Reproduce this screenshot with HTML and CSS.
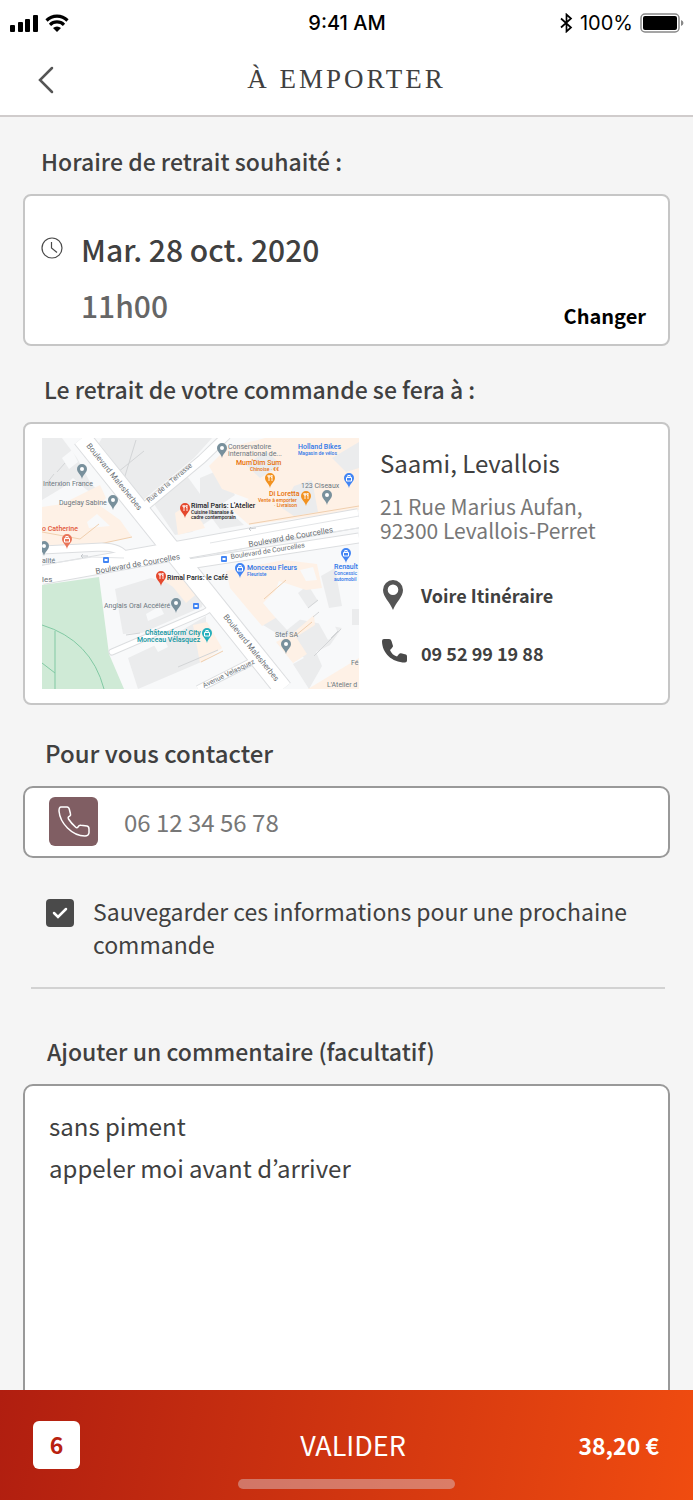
FILE: index.html
```html
<!DOCTYPE html>
<html lang="fr">
<head>
    <meta charset="UTF-8">
    <meta name="viewport" content="width=device-width, initial-scale=1.0">
    <title>À emporter</title>
    <link rel="stylesheet" href="styles.css">
</head>
<body>

<div class="status-bar">
    <div class="status-left">
        <svg width="28" height="18" viewBox="0 0 28 18">
            <rect x="0" y="11" width="5" height="7" rx="1"/>
            <rect x="8" y="8" width="5" height="10" rx="1"/>
            <rect x="15" y="5" width="5" height="13" rx="1"/>
            <rect x="23" y="1" width="5" height="17" rx="1"/>
        </svg>
        <svg width="24" height="18" viewBox="0 0 24 18">
            <path d="M1.500 6.500A15 15 0 0 1 22.500 6.500M5 10.800A10 10 0 0 1 19 10.800" fill="none" stroke="#000" stroke-width="3.200"/>
            <path d="M12 18L8 14A6 6 0 0 1 16 14Z"/>
        </svg>
    </div>
    <div class="status-time">9:41 AM</div>
    <div class="status-right">
        <svg width="13" height="20" viewBox="0 0 13 20">
            <path d="M1 5.500L11 14.500L6.500 18.500V1.500L11 5.500L1 14.500" fill="none" stroke="#000" stroke-width="1.700"/>
        </svg>
        <span>100%</span>
        <svg width="44" height="20" viewBox="0 0 44 20">
            <rect x="1" y="1" width="38" height="18" rx="4" fill="none" stroke="#888" stroke-width="1.500"/>
            <rect x="3" y="3" width="34" height="14" rx="2"/>
            <path d="M41 7Q43.500 8 43.500 10T41 13Z" fill="#888"/>
        </svg>
    </div>
</div>

<header class="header">
    <button type="button" class="back" aria-label="Retour">
        <svg width="16" height="28" viewBox="0 0 16 28">
            <path d="M14 2L2 14L14 26" fill="none" stroke="#555" stroke-width="2.500" stroke-linecap="round"/>
        </svg>
    </button>
    <h1>À EMPORTER</h1>
</header>

<main class="content">
    <h2>Horaire de retrait souhaité :</h2>
    <section class="card schedule">
        <svg class="clock" width="22" height="22" viewBox="0 0 22 22">
            <path d="M11 1A10 10 0 1 1 11 21A10 10 0 1 1 11 1M10.500 5V11L16 15.500" fill="none" stroke="#4a4a4a" stroke-width="1.200"/>
        </svg>
        <div class="slot">
            <p class="date">Mar. 28 oct. 2020</p>
            <p class="hour">11h00</p>
        </div>
        <button type="button" class="change">Changer</button>
    </section>

    <h2 class="title-place">Le retrait de votre commande se fera à :</h2>
    <section class="card place">
        <svg class="map" viewBox="0 0 317 251" role="img" aria-label="Plan du quartier">
            <defs>
                <g id="pin">
                    <path d="M0 9C-1 4 -5 3 -5 -1A5 5 0 0 1 5 -1C5 3 1 4 0 9Z"/>
                    <circle cx="0" cy="-1" r="2" fill="#fff"/>
                </g>
                <g id="food">
                    <path d="M0 9C-1 4 -5 3 -5 -1A5 5 0 0 1 5 -1C5 3 1 4 0 9Z"/>
                    <path d="M-2 -4V-2H-1V2M-1 -4V-2M0 -4V-2H-1M2 2V-4Q0 -2 2 -1" fill="none" stroke="#fff" stroke-width="0.900"/>
                </g>
                <g id="shop">
                    <path d="M0 9C-1 4 -5 3 -5 -1A5 5 0 0 1 5 -1C5 3 1 4 0 9Z"/>
                    <path d="M-2.500 -1.500H2.500V2H-2.500ZM-1.200 -1.500V-3.500H1.200V-1.500" fill="none" stroke="#fff"/>
                </g>
                <g id="bus">
                    <rect x="-3" y="-3" width="6" height="6" rx="1" fill="#4285f4"/>
                    <path d="M-1.500 -1H1.500V1H-1.500Z" fill="#fff"/>
                </g>
            </defs>
            <rect width="317" height="251" fill="#f8f9fa"/>

            <!-- blocks -->
            <g fill="#ebeced">
                <path d="M0 0H20L35 20L48 44L63 61L45 52L31 40L20 50L0 62Z"/>
                <path d="M60 0H170L152 20L101 62L57 5Z"/>
                <path d="M112 66L145 38L174 78L150 94L133 97Z"/>
                <path d="M158 40L177 32L193 57L180 66L202 87L178 91L158 64Z"/>
                <path d="M73 151L109 140L139 148L162 158L160 169L100 195L81 196Z"/>
                <path d="M86 220L120 204L164 178V222L96 251Z"/>
                <path d="M221 187L230 175L250 180L300 190L288 207L274 214L280 228L267 251L251 226L262 220L244 201Z"/>
                <path d="M256 155L266 147L276 163L266 170Z"/>
                <path d="M279 138L293 130L300 168L287 170Z"/>
                <path d="M310 171H317V187H310Z"/>
            </g>
            <g fill="#fef1e6">
                <path d="M0 69L20 66L58 47L64 60L57 67L78 82L90 99L33 111L0 107Z"/>
                <path d="M133 75L145 67L160 84L163 90L136 97Z"/>
                <path d="M167 28L185 10L223 0H317V72L207 87L190 72L207 61L180 51Z"/>
                <path d="M119 141L146 136L158 153L144 165L131 149Z"/>
                <path d="M184 133L242 122L275 126L280 150L264 152L237 143L227 168L237 178L220 188L188 150Z"/>
                <path d="M151 187L165 184L180 210L158 225Z"/>
                <path d="M234 204L250 196L272 177L273 187L254 199L265 216L251 225Z"/>
                <path d="M266 251L317 220V251Z"/>
            </g>
            <g fill="#ebeced">
                <path d="M204 27L224 13L240 27L218 40Z"/>
                <path d="M240 70L252 48L270 42L276 74L252 78Z"/>
                <path d="M290 20L317 4V30L304 34Z"/>
            </g>
            <g fill="#f8f9fa">
                <path d="M20 20L30 12L36 24L27 31Z"/>
                <path d="M45 84L55 76L68 88L47 90Z"/>
                <path d="M104 176L118 168L122 176L106 183Z"/>
                <path d="M112 207L122 201L126 209L116 214Z"/>
                <path d="M221 165L233 153L248 163L260 180L245 192L232 178Z"/>
                <path d="M258 132L271 129L275 142L264 143Z"/>
                <path d="M276 184L288 177L296 195L286 202Z"/>
            </g>
            <g fill="none" stroke="#d3d5d7" stroke-width="1">
                <path d="M79 51L94 2M76 34L102 13M15 34L23 25M5 45L12 36"/>
                <path d="M84 197L98 195M132 188L159 177M136 229L176 212"/>
                <path d="M266 170L276 162M271 179L277 174M272 218L299 191M289 200L296 193"/>
            </g>
            <g fill="none" stroke="#f0cfae" stroke-width="1">
                <path d="M0 94L38 101L57 86M34 111L90 99M222 161L244 142M253 198L270 184M159 224L181 213M207 86L317 68"/>
            </g>

            <!-- park -->
            <path d="M0 147L57 139L67 216L82 251H0Z" fill="#cfead6"/>
            <path d="M0 187Q49 202 62 251M13 193V251M0 225L13 235" fill="none" stroke="#81c9a3" stroke-width="1"/>

            <!-- streets -->
            <g fill="none" stroke="#dcdee0">
                <path d="M101 70L160 21L185 -3" stroke-width="10"/>
                <path d="M40 0L241 251" stroke-width="20"/>
                <path d="M0 137L150 110L317 80" stroke-width="20"/>
                <path d="M140 127L317 100" stroke-width="11"/>
                <path d="M0 112L60 109Q78 109 84 119" stroke-width="9"/>
                <path d="M70 214L163 174L176 166" stroke-width="7" stroke-linecap="round"/>
                <path d="M156 251L213 222" stroke-width="8"/>
            </g>
            <g fill="none" stroke="#fff">
                <path d="M101 70L160 21L185 -3" stroke-width="8"/>
                <path d="M0 137L150 110L317 80" stroke-width="18"/>
                <path d="M140 127L317 100" stroke-width="9"/>
                <path d="M40 0L241 251" stroke-width="18"/>
                <path d="M0 112L60 109Q78 109 84 119" stroke-width="7"/>
                <path d="M70 214L163 174L176 166" stroke-width="5" stroke-linecap="round"/>
                <path d="M156 251L213 222" stroke-width="6"/>
            </g>
            <path d="M168 105L250 90L317 78M172 116L200 111M225 104L317 90M0 127L50 119L82 120" fill="none" stroke="#e3e5e7"/>
            <path d="M46 118H39M41 116L39 118L41 120M214 90L207 91M209 89L207 91L209 93" fill="none" stroke="#b5b9bd" stroke-width="0.700"/>

            <!-- street names -->
            <g class="map-street">
                <text transform="translate(44 8) rotate(51)">Boulevard Malesherbes</text>
                <text transform="translate(181 179) rotate(51)">Boulevard Malesherbes</text>
                <text transform="translate(54 136) rotate(-10)">Boulevard de Courcelles</text>
                <text transform="translate(207 109) rotate(-10)">Boulevard de Courcelles</text>
                <text class="small" transform="translate(189 121) rotate(-9)">Boulevard de Courcelles</text>
                <text class="small" transform="translate(107 65) rotate(-40)">Rue de la Terrasse</text>
                <text class="small" transform="translate(162 250) rotate(-26)">Avenue Velasquez</text>
                <text x="0" y="144">les</text>
            </g>

            <!-- places -->
            <g class="map-label grey">
                <text x="1" y="48">Interxion France</text>
                <text x="17" y="67">Dugelay Sabine</text>
                <text x="186" y="11">Conservatoire</text>
                <text x="186" y="18">international de...</text>
                <text x="259" y="50">123 Ciseaux</text>
                <text x="0" y="125">alité</text>
                <text x="62" y="170">Anglais Oral Accéléré</text>
                <text x="233" y="199">Stef SA</text>
                <text x="309" y="227">Fé</text>
                <text x="285" y="249">L'Atelier d</text>
            </g>
            <g class="map-label orange">
                <text x="194" y="27">Mum'Dim Sum</text>
                <text class="small" x="208" y="33">Chinoise · €€</text>
                <text x="227" y="58">Di Loretta</text>
                <text class="small" x="216" y="64">Vente à emporter</text>
                <text class="small" x="232" y="69">· Livraison</text>
            </g>
            <text class="map-label red" x="0" y="93">o Catherine</text>
            <g class="map-label blue">
                <text x="256" y="11">Holland Bikes</text>
                <text class="small" x="256" y="17">Magasin de vélos</text>
                <text x="205" y="132">Monceau Fleurs</text>
                <text class="small" x="205" y="138">Fleuriste</text>
                <text x="292" y="131">Renault</text>
                <text class="small" x="292" y="137">Concessic</text>
                <text class="small" x="292" y="143">automobil</text>
            </g>
            <g class="map-label teal">
                <text x="103" y="197">Châteauform' City</text>
                <text x="95" y="204">Monceau Vélasquez</text>
            </g>
            <g class="map-label black">
                <text x="149" y="70">Rimal Paris: L'Atelier</text>
                <text class="small" x="149" y="76">Cuisine libanaise &amp;</text>
                <text class="small" x="149" y="81">cadre contemporain</text>
                <text x="125" y="142">Rimal Paris: le Café</text>
            </g>

            <g fill="#78909c">
                <use href="#pin" x="40" y="32"/>
                <use href="#pin" x="71" y="63"/>
                <use href="#pin" x="2" y="109"/>
                <use href="#pin" x="180" y="11"/>
                <use href="#pin" x="285" y="58"/>
                <use href="#pin" x="134" y="166"/>
                <use href="#pin" x="244" y="207"/>
            </g>
            <use href="#food" x="228" y="41" fill="#f29220"/>
            <use href="#food" x="264" y="59" fill="#f29220"/>
            <use href="#food" x="143" y="71" fill="#e5482d"/>
            <use href="#food" x="119" y="139" fill="#e5482d"/>
            <use href="#shop" x="25" y="102" fill="#e9755a"/>
            <use href="#shop" x="307" y="41" fill="#4285f4"/>
            <use href="#shop" x="304" y="116" fill="#4285f4"/>
            <use href="#shop" x="198" y="131" fill="#4285f4"/>
            <use href="#shop" x="165" y="196" fill="#26b0bd"/>
            <use href="#bus" x="64" y="122"/>
            <use href="#bus" x="182" y="121"/>
            <use href="#bus" x="154" y="168"/>
        </svg>
        <div class="place-info">
            <h3>Saami, Levallois</h3>
            <address>21 Rue Marius Aufan,<br>92300 Levallois-Perret</address>
            <a href="#itineraire" class="place-link">
                <svg width="26" height="30" viewBox="0 0 26 30">
                    <path fill-rule="evenodd" d="M11 0A10 10 0 0 1 21 10C21 17 14 22 11 30C8 22 1 17 1 10A10 10 0 0 1 11 0ZM11 4.500A5.300 5.300 0 1 0 11 15.100A5.300 5.300 0 1 0 11 4.500Z" fill="#555"/>
                </svg>
                Voire Itinéraire
            </a>
            <a href="tel:0952991988" class="place-link">
                <svg width="26" height="30" viewBox="0 0 26 30">
                    <path d="M2 1H7Q9 1 9.500 3L11 8Q11 9 8 12Q10 17 15 18.500L17 16Q18 15 19 15.300L24 16.500Q25 17 25 18.500V22.500Q25 24.500 23 24.500C10 24.500 0 15 0 3Q0 1 2 1Z" fill="#4a4a4a"/>
                </svg>
                09 52 99 19 88
            </a>
        </div>
    </section>

    <h2 class="title-contact"><label for="phone">Pour vous contacter</label></h2>
    <div class="card phone-field">
        <span class="phone-icon">
            <svg width="34" height="36" viewBox="0 0 34 36">
                <path d="M4 4H10Q12 4 12.500 7L13.500 11Q14 12.500 12.500 13.200Q10.500 14 11.500 16Q14 20 18.500 24Q20 25.500 21 24Q22 22 24 22.300L30 23Q32 23.500 32 26V30Q31.500 33 28 33C15 33 3 20 2 8Q2 4 4 4Z" fill="none" stroke="#fff" stroke-width="1.500"/>
            </svg>
        </span>
        <input type="tel" id="phone" placeholder="06 12 34 56 78">
    </div>

    <div class="save">
        <input type="checkbox" id="save" checked>
        <label for="save">Sauvegarder ces informations pour une prochaine commande</label>
    </div>

    <hr>

    <h2 class="title-comment"><label for="comment">Ajouter un commentaire (facultatif)</label></h2>
    <textarea class="card comment" id="comment">sans piment
appeler moi avant d’arriver</textarea>
</main>

<footer class="footer">
    <div class="footer-row">
        <span class="count">6</span>
        <button type="button" class="submit">VALIDER</button>
        <span class="total">38,20 €</span>
    </div>
    <div class="home-indicator"></div>
</footer>

</body>
</html>
```

FILE: styles.css
```css
* {
    box-sizing: border-box;
}
body {
    font-family: "Noto Sans CJK KR", "Noto Sans", sans-serif;
    margin: 0;
    height: 100vh;
    display: flex;
    flex-direction: column;
    background-color: #f5f5f5;
    color: #404040;
}
h1, h2, h3, p, address {
    margin: 0;
    font-style: normal;
}
button {
    font-family: inherit;
    border: none;
    padding: 0;
    background: none;
    cursor: pointer;
}
svg {
    display: block;
    flex-shrink: 0;
}

/* status bar */
.status-bar {
    display: grid;
    grid-template-columns: 1fr auto 1fr;
    align-items: center;
    height: 46px;
    flex-shrink: 0;
    padding: 0 9px 0 10px;
    background-color: #fff;
    color: #000;
    font-family: Inter, sans-serif;
    font-size: 20px;
}
.status-left, .status-right {
    display: flex;
    align-items: center;
    gap: 7px;
}
.status-right {
    justify-content: flex-end;
}
.status-time {
    font-weight: 500;
}

/* header */
.header {
    display: grid;
    grid-template-columns: 54px 1fr 54px;
    align-items: center;
    height: 71px;
    flex-shrink: 0;
    padding: 0 0 2px;
    background-color: #fff;
    border-bottom: 2px solid #d0cccc;
}
.back {
    display: flex;
    justify-content: flex-end;
}
.header h1 {
    font-family: "Liberation Serif", serif;
    font-size: 27px;
    font-weight: normal;
    letter-spacing: 3px;
    text-align: center;
    color: #404040;
}

/* content */
.content {
    flex: 1;
    min-height: 0;
    overflow-y: auto;
    scrollbar-width: none;
    padding: 27px 23px 0;
}
h2 {
    font-size: 23px;
    font-weight: 500;
    line-height: 34px;
    padding-left: 18px;
    margin-bottom: 16px;
}
.card {
    background-color: #fff;
    border: 2px solid #c6c6c6;
    border-radius: 8px;
}
.schedule {
    display: flex;
    height: 152px;
    padding: 33px 22px 14px 16px;
    margin-bottom: 26px;
}
.clock {
    margin-top: 8px;
}
.slot {
    flex: 1;
    padding-left: 18px;
    font-size: 30px;
    font-weight: 500;
    line-height: 40px;
}
.hour {
    margin-top: 16px;
    color: #666;
}
.change {
    align-self: flex-end;
    font-size: 20px;
    font-weight: bold;
    line-height: 28px;
    color: #000;
}
.title-place {
    padding-left: 21px;
}
.place {
    display: flex;
    align-items: flex-start;
    gap: 21px;
    padding: 14px 17px;
    margin-bottom: 31px;
}
.map {
    width: 50%;
    max-width: 317px;
    flex: 1 1 317px;
}
.place-info {
    flex: 1 1 270px;
}
.place-info h3 {
    font-size: 24px;
    font-weight: 400;
    line-height: 34px;
    margin: 8px 0 14px;
}
address {
    font-size: 21px;
    font-weight: 400;
    line-height: 24px;
    color: #777;
    margin-bottom: 38px;
}
.place-link {
    display: flex;
    align-items: center;
    gap: 15px;
    font-size: 18px;
    font-weight: bold;
    line-height: 30px;
    color: #404040;
    text-decoration: none;
}
.place-link + .place-link {
    margin-top: 28px;
}
.place-link svg {
    margin-left: 2px;
    margin-right: -2px;
}

/* map texts */
.map-street {
    font-family: Roboto, sans-serif;
    font-size: 8px;
    fill: #6b7075;
}
.map-label {
    font-family: Roboto, sans-serif;
    font-size: 7px;
    font-weight: 500;
}
.map-street .small {
    font-size: 7px;
}
.map-label .small {
    font-size: 5px;
}
.grey {
    fill: #6b7780;
    font-weight: 400;
}
.orange { fill: #e8710a; }
.red { fill: #e25a3c; }
.blue { fill: #2f77e8; }
.teal { fill: #12959f; }
.black { fill: #202124; }

.title-contact {
    padding-left: 22px;
    font-size: 24px;
}
.phone-field {
    display: flex;
    align-items: center;
    gap: 26px;
    height: 72px;
    padding: 0 24px 2px;
    border-color: #999;
    border-radius: 10px;
}
.phone-icon {
    display: grid;
    place-items: center;
    width: 49px;
    height: 49px;
    border-radius: 6px;
    background-color: #805e63;
}
.phone-field input {
    flex: 1;
    min-width: 0;
    border: none;
    padding: 0;
    outline: none;
    font-family: inherit;
    font-size: 24px;
    font-weight: 400;
    color: #404040;
    background: none;
}
.phone-field input::placeholder {
    color: #777;
    opacity: 1;
}
.save {
    display: flex;
    gap: 19px;
    padding: 37px 22px 26px 23px;
    font-size: 23px;
    font-weight: 400;
    line-height: 33px;
}
.save input {
    appearance: none;
    flex-shrink: 0;
    width: 28px;
    height: 28px;
    margin: 4px 0 0;
    border-radius: 4px;
    background: #4a4a4a url("data:image/svg+xml,%3Csvg xmlns='http://www.w3.org/2000/svg' viewBox='0 0 28 28'%3E%3Cpath d='M8 14l4 4 8-8' fill='none' stroke='%23fff' stroke-width='2.500' stroke-linecap='round'/%3E%3C/svg%3E");
}
hr {
    margin: 0 5px 45px 8px;
    border: none;
    border-top: 2px solid #d2d2d2;
}
.title-comment {
    padding-left: 24px;
}
.comment {
    display: block;
    width: 100%;
    height: 360px;
    padding: 19px 24px;
    resize: none;
    outline: none;
    font-family: inherit;
    font-size: 24px;
    font-weight: 400;
    line-height: 42px;
    color: #404040;
    border-color: #999;
    border-radius: 10px;
}

/* bottom bar */
.footer {
    flex-shrink: 0;
    height: 110px;
    padding: 31px 34px 0 33px;
    background: linear-gradient(100deg, #b01e10, #d03510 50%, #f04c10);
    color: #fff;
}
.footer-row {
    display: grid;
    grid-template-columns: 1fr auto 1fr;
    align-items: center;
}
.count {
    display: grid;
    place-items: center;
    width: 47px;
    height: 48px;
    border-radius: 6px;
    background-color: #fff;
    color: #b82210;
    font-size: 23px;
    font-weight: bold;
    line-height: 34px;
    padding-bottom: 2px;
}
.submit {
    padding-left: 14px;
    font-size: 27px;
    font-weight: 400;
    line-height: 48px;
    color: #fff;
}
.total {
    text-align: right;
    font-size: 23px;
    font-weight: bold;
}
.home-indicator {
    width: 217px;
    height: 10px;
    margin: 10px auto 0;
    border-radius: 5px;
    background-color: rgba(220, 190, 190, 0.5);
}
```
